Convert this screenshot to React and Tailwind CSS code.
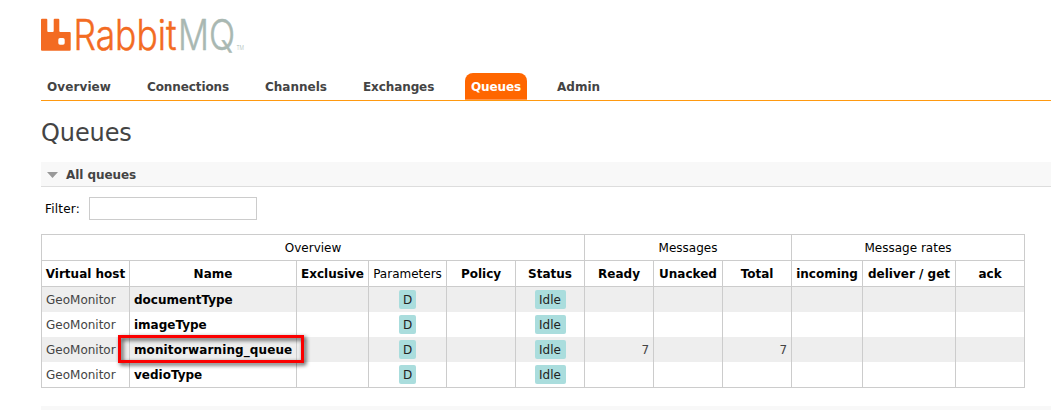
import React from "react";

const tabs = [
  { label: "Overview", width: "w-[100px]", tracking: "tracking-[0.1px]" },
  { label: "Connections", width: "w-[118px]", tracking: "tracking-[-0.1px]" },
  { label: "Channels", width: "w-[98px]", tracking: "tracking-normal" },
  { label: "Exchanges", width: "w-[108px]", tracking: "tracking-[-0.1px]" },
  { label: "Queues", width: "w-[62px]", tracking: "tracking-[-0.1px]", active: true },
  { label: "Admin", width: "w-[60px]", tracking: "tracking-normal" },
];

const columns = [
  { label: "Virtual host", width: "w-[88px]" },
  { label: "Name", width: "w-[167px]" },
  { label: "Exclusive", width: "w-[72px]" },
  { label: "Parameters", width: "w-[78px]", plain: true },
  { label: "Policy", width: "w-[69px]" },
  { label: "Status", width: "w-[69px]" },
  { label: "Ready", width: "w-[69px]" },
  { label: "Unacked", width: "w-[69px]" },
  { label: "Total", width: "w-[69px]" },
  { label: "incoming", width: "w-[71px]" },
  { label: "deliver / get", width: "w-[93px]" },
  { label: "ack", width: "w-[69px]" },
];

const queues = [
  { name: "documentType" },
  { name: "imageType" },
  { name: "monitorwarning_queue", ready: 7, total: 7, marked: true },
  { name: "vedioType" },
];

function Logo() {
  return (
    <svg className="block h-[64px] w-[210px]" viewBox="41 2 210 64" aria-label="RabbitMQ">
      <path
        fill="#f36b22"
        fillRule="evenodd"
        d="M42 18.700h4.300q1 0 1 1V31q0 1 1 1h4.400q1 0 1-1V19.700q0-1 1-1h3.600q1 0 1 1V31q0 1 1 1h9.400q1 0 1 1v16.700q0 1-1 1H42q-1 0-1-1v-30q0-1 1-1zM60 38q-1.700 0-1.700 1.700v3.300q0 1.700 1.700 1.700h3q1.700 0 1.700-1.700v-3.300Q64.700 38 63 38z"
      />
      <g fontFamily="Inter, sans-serif" fontWeight="300">
        <text x="73.500" y="49.700" fontSize="42" fill="#f36b22" stroke="#f36b22" strokeWidth="0.5" textLength="103" lengthAdjust="spacingAndGlyphs">Rabbit</text>
        <text x="178" y="49.700" fontSize="42" fill="#a9b8b2" stroke="#a9b8b2" strokeWidth="0.5" textLength="57" lengthAdjust="spacingAndGlyphs">MQ</text>
        <text x="236.500" y="49.700" fontSize="6.500" fill="#a9b8b2" textLength="7.500" lengthAdjust="spacingAndGlyphs">TM</text>
      </g>
    </svg>
  );
}

function Badge({ children, width }) {
  return (
    <span className={`mx-auto block h-[19px] rounded-[2px] bg-[#aadddd] pt-px text-center leading-[18px] text-[#222] ${width}`}>
      {children}
    </span>
  );
}

const cell = "border-r border-[#ccc] p-0";

export default function App() {
  return (
    <div className="h-[410px] overflow-hidden bg-white pl-[41px] pt-[2px] text-[12px] leading-[16px] text-black [font-family:'DejaVu_Sans',Verdana,sans-serif]">
      <Logo />

      <nav className="mt-[7px] flex h-[28px] border-b border-[#ff9910]">
        {tabs.map((t, i) => (
          <a
            key={t.label}
            className={`block h-[27px] pl-[6px] pt-[6px] font-bold ${t.width} ${t.tracking} ${
              t.active
                ? "rounded-t-[8px] border-b border-[#ff944d] bg-[#ff6600] text-white"
                : "text-[#444]"
            } ${i === 5 ? "ml-[24px]" : ""}`}
          >
            {t.label}
          </a>
        ))}
      </nav>

      <h1 className="mt-[17px] h-[30px] text-[24px] leading-[30px] tracking-[-0.1px] text-[#444]">Queues</h1>

      <section className="mt-[14px]">
        <h2 className="flex h-[25px] items-center border-b border-[#ddd] bg-[#f8f8f8] pl-[6px] pt-px font-bold tracking-[-0.06px] text-[#444]">
          <svg className="mr-[8px] h-[6px] w-[11px]" viewBox="0 0 11 6">
            <path d="M0 0h11L5.500 6z" fill="#999" />
          </svg>
          All queues
        </h2>

        <label className="mt-[10px] flex h-[23px] items-center pl-[4px]">
          <span className="w-[44px] tracking-[0.2px]">Filter:</span>
          <input className="h-[23px] w-[168px] border border-[#ccc] bg-white outline-none" />
        </label>

        <table className="mt-[14px] w-[984px] table-fixed border-separate border-spacing-0 border-b border-l border-t border-[#ccc]">
          <colgroup>
            {columns.map((c) => (
              <col key={c.label} className={c.width} />
            ))}
          </colgroup>
          <thead>
            <tr className="h-[26px]">
              <th colSpan={6} className={`${cell} border-b font-normal`}>Overview</th>
              <th colSpan={3} className={`${cell} border-b font-normal`}>Messages</th>
              <th colSpan={3} className={`${cell} border-b font-normal`}>Message rates</th>
            </tr>
            <tr className="h-[26px]">
              {columns.map((c) => (
                <th
                  key={c.label}
                  className={`${cell} whitespace-nowrap border-b ${c.plain ? "font-normal" : "font-bold"}`}
                >
                  {c.label}
                </th>
              ))}
            </tr>
          </thead>
          <tbody>
            {queues.map((q) => (
              <tr key={q.name} className="h-[25px] odd:bg-[#eee]">
                <td className={`${cell} pl-[4px] text-[#444]`}>GeoMonitor</td>
                <td className={`${cell} relative pl-[4px] font-bold ${q.marked ? "tracking-[0.11px]" : ""}`}>
                  {q.name}
                  {q.marked && (
                    <span className="absolute left-[-12px] top-[-2px] z-10 h-[28px] w-[186px] border-[3px] border-[#fb0000] drop-shadow-[2px_2px_2px_rgba(0,0,0,0.75)]" />
                  )}
                </td>
                <td className={cell} />
                <td className={cell}><Badge width="w-[17px]">D</Badge></td>
                <td className={cell} />
                <td className={cell}><Badge width="w-[31px]">Idle</Badge></td>
                <td className={`${cell} pr-[4px] text-right text-[#444]`}>{q.ready}</td>
                <td className={cell} />
                <td className={`${cell} pr-[4px] text-right text-[#444]`}>{q.total}</td>
                <td className={cell} />
                <td className={cell} />
                <td className={cell} />
              </tr>
            ))}
          </tbody>
        </table>
      </section>

      <div className="mt-[18px] h-[25px] bg-[#f8f8f8]" />
    </div>
  );
}
